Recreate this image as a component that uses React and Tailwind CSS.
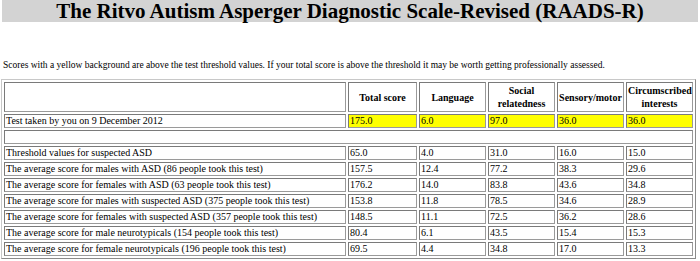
import React from 'react';

const columns = ['Total score', 'Language', 'Social relatedness', 'Sensory/motor', 'Circumscribed interests'];

const yours = { label: 'Test taken by you on 9 December 2012', values: ['175.0', '6.0', '97.0', '36.0', '36.0'] };

const rows = [
  { label: 'Threshold values for suspected ASD', values: ['65.0', '4.0', '31.0', '16.0', '15.0'] },
  { label: 'The average score for males with ASD (86 people took this test)', values: ['157.5', '12.4', '77.2', '38.3', '29.6'] },
  { label: 'The average score for females with ASD (63 people took this test)', values: ['176.2', '14.0', '83.8', '43.6', '34.8'] },
  { label: 'The average score for males with suspected ASD (375 people took this test)', values: ['153.8', '11.8', '78.5', '34.6', '28.9'] },
  { label: 'The average score for females with suspected ASD (357 people took this test)', values: ['148.5', '11.1', '72.5', '36.2', '28.6'] },
  { label: 'The average score for male neurotypicals (154 people took this test)', values: ['80.4', '6.1', '43.5', '15.4', '15.3'] },
  { label: 'The average score for female neurotypicals (196 people took this test)', values: ['69.5', '4.4', '34.8', '17.0', '13.3'] },
];

// classic border=1 table cell look
const cell = 'h-[14px] border border-t-[#7a7a7a] border-l-[#7a7a7a] border-b-[#9a9a9a] border-r-[#9a9a9a] px-px py-0 align-middle text-left whitespace-nowrap overflow-hidden';

const App = () => {
  return (
    <div className="w-[700px] h-[261px] overflow-hidden bg-white text-black" style={{ fontFamily: '"Liberation Serif", "Times New Roman", serif' }}>
      <h1 className="mx-[2px] h-[22px] bg-[#d3d3d3] text-center font-bold text-[21px] leading-[22px] whitespace-nowrap">
        The Ritvo Autism Asperger Diagnostic Scale-Revised (RAADS-R)
      </h1>

      <p className="mt-[38px] ml-[3px] text-[9.5px] leading-[11px] whitespace-nowrap">
        Scores with a yellow background are above the test threshold values. If your total score is above the threshold it may be worth getting professionally assessed.
      </p>

      <table className="mt-[8px] ml-[1px] w-[695px] table-fixed border-separate border-spacing-[2px] border border-t-[#c8c8c8] border-l-[#c8c8c8] border-b-[#8a8a8a] border-r-[#8a8a8a] text-[10px] leading-[12px]">
        <colgroup>
          <col className="w-[342px]" />
          <col className="w-[69px]" />
          <col className="w-[67px]" />
          <col className="w-[67px]" />
          <col className="w-[67px]" />
          <col className="w-[67px]" />
        </colgroup>
        <thead>
          <tr>
            <th className={`${cell} h-[30px]`}></th>
            {columns.map((c) => (
              <th key={c} className={`${cell} h-[30px] !text-center font-bold !whitespace-normal leading-[13px]`}>{c}</th>
            ))}
          </tr>
        </thead>
        <tbody>
          <tr>
            <td className={cell}>{yours.label}</td>
            {yours.values.map((v, i) => (
              <td key={i} className={`${cell} bg-[#ffff00]`}>{v}</td>
            ))}
          </tr>
          <tr>
            <td colSpan={6} className={cell}></td>
          </tr>
          {rows.map((r) => (
            <tr key={r.label}>
              <td className={cell}>{r.label}</td>
              {r.values.map((v, i) => (
                <td key={i} className={cell}>{v}</td>
              ))}
            </tr>
          ))}
        </tbody>
      </table>
    </div>
  );
};

export default App;
